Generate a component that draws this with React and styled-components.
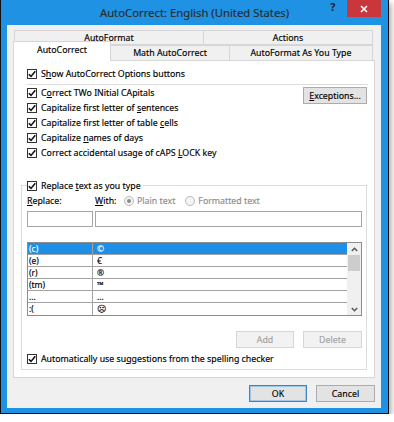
import React from "react";
import styled, { createGlobalStyle } from "styled-components";

const GlobalStyle = createGlobalStyle`
  html, body { margin: 0; padding: 0; background: #ffffff; }
  body {
    font-family: "Noto Sans", "Open Sans", sans-serif;
    color: #000;
    -webkit-text-stroke: 0.15px currentColor;
  }
  * { box-sizing: border-box; }
`;

const Window = styled.div`
  width: 389px;
  height: 414px;
  background: #2092e4;
  border: 1px solid #111;
  border-top: none;
  box-shadow: 2px 3px 6px rgba(0, 0, 0, 0.35);
  display: flex;
  flex-direction: column;
`;

const TitleBar = styled.div`
  height: 25px;
  display: grid;
  grid-template-columns: 1fr auto 1fr;
  align-items: start;
`;

const Title = styled.div`
  grid-column: 2;
  font-size: 11.3px;
  line-height: 26px;
  color: #2a2a2a;
  white-space: nowrap;
`;

const Controls = styled.div`
  grid-column: 3;
  justify-self: end;
  display: flex;
  margin-right: 7px;
`;

const HelpButton = styled.div`
  width: 28px;
  height: 17px;
  display: flex;
  align-items: center;
  justify-content: center;
  font-size: 10px;
  font-weight: 700;
  color: #222;
  padding-bottom: 4px;
`;

const CloseButton = styled.div`
  width: 34px;
  height: 17px;
  background: #c9363b;
  display: flex;
  align-items: center;
  justify-content: center;
`;

const Client = styled.div`
  flex: 1;
  margin: 0 7px 6px 6px;
  background: #f0f0f0;
  padding: 5px 6px 6px 6px;
  display: flex;
  flex-direction: column;
`;

const TabStrip = styled.div`
  display: flex;
  flex-direction: column;
`;

const TabRow = styled.div`
  display: flex;
  align-items: flex-end;
  height: ${(p) => p.$h}px;
  padding: 0 2px 0 ${(p) => p.$pl}px;
`;

const Tab = styled.div`
  width: ${(p) => (p.$w ? `${p.$w}px` : "auto")};
  flex: ${(p) => (p.$w ? "none" : "1")};
  height: ${(p) => (p.$active ? 20 : p.$h || 16)}px;
  margin-top: ${(p) => (p.$active ? -3 : 0)}px;
  margin-left: -1px;
  position: relative;
  z-index: ${(p) => (p.$active ? 2 : 1)};
  background: ${(p) => (p.$active ? "#ffffff" : "#f0f0f0")};
  border: 1px solid #d6d6d6;
  border-bottom: ${(p) => (p.$active ? "none" : "1px solid #d6d6d6")};
  display: flex;
  align-items: center;
  justify-content: center;
  font-size: 8.8px;
  padding-bottom: ${(p) => (p.$active ? 3 : 0)}px;
  white-space: nowrap;
`;

const Panel = styled.div`
  flex: 1;
  background: #ffffff;
  border: 1px solid #d6d6d6;
  margin-top: -1px;
  padding: 5px 7px 7px 13px;
  display: flex;
  flex-direction: column;
`;

const CheckRow = styled.div`
  display: flex;
  align-items: center;
  gap: 4px;
  height: 15px;
  font-size: 8.8px;
  white-space: nowrap;
`;

const Box = styled.span`
  width: 10px;
  height: 10px;
  border: 1px solid #333;
  background: #fff;
  display: inline-flex;
  align-items: center;
  justify-content: center;
  flex: none;
`;

const Key = styled.span`
  text-decoration: underline;
  text-underline-offset: 1px;
`;

const Separator = styled.div`
  height: 1px;
  background: #dcdcdc;
  margin-top: 3px;
  margin-right: -1px;
`;

const TopSection = styled.div`
  display: flex;
  justify-content: space-between;
  align-items: flex-start;
`;

const CheckList = styled.div`
  display: flex;
  flex-direction: column;
`;

const Button = styled.div`
  width: ${(p) => p.$w}px;
  height: 17px;
  margin-top: ${(p) => p.$mt || 0}px;
  display: flex;
  align-items: center;
  justify-content: center;
  font-size: 8.8px;
  background: ${(p) => (p.$disabled ? "#f2f2f2" : "#e3e3e3")};
  color: ${(p) => (p.$disabled ? "#a3a3a3" : "#000")};
  border: 1px solid
    ${(p) => (p.$default ? "#3b86c8" : p.$disabled ? "#d6d6d6" : "#acacac")};
  box-shadow: ${(p) => (p.$default ? "inset 0 0 0 1px #9cc6ea" : "none")};
`;

const GroupBox = styled.fieldset`
  margin: 18px 0 0 -6px;
  border: 1px solid #dcdcdc;
  padding: 0 4px 3px 5px;
  min-width: 0;
  display: flex;
  flex-direction: column;
`;

const Legend = styled.legend`
  padding: 0 2px 0 0;
  margin: 0;
`;

const LabelsRow = styled.div`
  display: flex;
  align-items: center;
  height: 15px;
  font-size: 8.8px;
  white-space: nowrap;
`;

const FieldLabel = styled.span`
  width: ${(p) => p.$w}px;
  flex: none;
`;

const RadioOption = styled.span`
  display: inline-flex;
  align-items: center;
  gap: 3px;
  color: #8d8d8d;
  margin-right: 10px;
`;

const Radio = styled.span`
  width: 10px;
  height: 10px;
  border-radius: 50%;
  border: 1px solid #b9b9b9;
  background: #f4f4f4;
  display: inline-flex;
  align-items: center;
  justify-content: center;
  &::after {
    content: "";
    width: 4px;
    height: 4px;
    border-radius: 50%;
    background: ${(p) => (p.$checked ? "#8a8a8a" : "transparent")};
  }
`;

const InputsRow = styled.div`
  display: flex;
  gap: 2px;
  margin-top: 3px;
`;

const TextInput = styled.div`
  height: 16px;
  width: ${(p) => (p.$w ? `${p.$w}px` : "auto")};
  flex: ${(p) => (p.$w ? "none" : "1")};
  border: 1px solid #a6a6a6;
  background: #fff;
`;

const ListBox = styled.div`
  margin-top: 15px;
  height: 74px;
  border: 1px solid #8c8c8c;
  display: flex;
  background: #fff;
`;

const Rows = styled.div`
  flex: 1;
  display: flex;
  flex-direction: column;
`;

const Row = styled.div`
  height: 12px;
  display: grid;
  grid-template-columns: 65px 1fr;
  border-bottom: ${(p) => (p.$last ? "none" : "1px solid #a2a2a2")};
  background: ${(p) => (p.$selected ? "#1e8fe6" : "transparent")};
  color: ${(p) => (p.$selected ? "#fff" : "#000")};
  font-size: 8.5px;
  line-height: 11px;
`;

const Cell = styled.span`
  padding-left: ${(p) => (p.$first ? 1 : 4)}px;
  border-right: ${(p) => (p.$first ? "1px solid #a2a2a2" : "none")};
  white-space: nowrap;
  overflow: hidden;
`;

const ScrollBar = styled.div`
  width: 14px;
  background: #f0f0f0;
  display: flex;
  flex-direction: column;
  align-items: center;
`;

const Arrow = styled.div`
  height: 12px;
  display: flex;
  align-items: center;
  justify-content: center;
`;

const Thumb = styled.div`
  width: 12px;
  height: 16px;
  background: #cdcdcd;
`;

const Spacer = styled.div`
  flex: 1;
`;

const ButtonRow = styled.div`
  display: flex;
  justify-content: flex-end;
  gap: 9px;
  margin-top: ${(p) => p.$mt}px;
`;

const AutoRow = styled(CheckRow)`
  margin-top: 3px;
`;

const Check = () => (
  <Box>
    <svg width="8" height="8" viewBox="0 0 8 8">
      <path d="M0.8 4.2 L3 6.4 L7.3 1.2" fill="none" stroke="#111" strokeWidth="1.6" />
    </svg>
  </Box>
);

const Chevron = ({ up }) => (
  <svg width="7" height="5" viewBox="0 0 7 5">
    <path
      d={up ? "M0.8 4 L3.5 1.2 L6.2 4" : "M0.8 1 L3.5 3.8 L6.2 1"}
      fill="none"
      stroke="#555"
      strokeWidth="1.4"
    />
  </svg>
);

const entries = [
  ["(c)", "©"],
  ["(e)", "€"],
  ["(r)", "®"],
  ["(tm)", "™"],
  ["...", "…"],
  [":(", "☹"],
];

export default function App() {
  return (
    <>
      <GlobalStyle />
      <Window>
        <TitleBar>
          <Title>AutoCorrect: English (United States)</Title>
          <Controls>
            <HelpButton>?</HelpButton>
            <CloseButton>
              <svg width="8" height="8" viewBox="0 0 8 8">
                <path d="M1 1 L7 7 M7 1 L1 7" stroke="#fff" strokeWidth="1.6" />
              </svg>
            </CloseButton>
          </Controls>
        </TitleBar>
        <Client>
          <TabStrip>
            <TabRow $h={15} $pl={2}>
              <Tab $w={190} $h={15}>AutoFormat</Tab>
              <Tab $h={15}>Actions</Tab>
            </TabRow>
            <TabRow $h={16} $pl={1}>
              <Tab $w={98} $active>AutoCorrect</Tab>
              <Tab $w={120}>Math AutoCorrect</Tab>
              <Tab>AutoFormat As You Type</Tab>
            </TabRow>
          </TabStrip>
          <Panel>
            <CheckRow>
              <Check />
              <span>
                S<Key>h</Key>ow AutoCorrect Options buttons
              </span>
            </CheckRow>
            <Separator />
            <TopSection>
              <CheckList>
                <CheckRow>
                  <Check />
                  <span>
                    C<Key>o</Key>rrect TWo INitial CApitals
                  </span>
                </CheckRow>
                <CheckRow>
                  <Check />
                  <span>
                    Capitalize first letter of <Key>s</Key>entences
                  </span>
                </CheckRow>
                <CheckRow>
                  <Check />
                  <span>
                    Capitalize first letter of table <Key>c</Key>ells
                  </span>
                </CheckRow>
                <CheckRow>
                  <Check />
                  <span>
                    Capitalize <Key>n</Key>ames of days
                  </span>
                </CheckRow>
                <CheckRow>
                  <Check />
                  <span>
                    Correct accidental usage of cAPS <Key>L</Key>OCK key
                  </span>
                </CheckRow>
              </CheckList>
              <Button $w={64} $mt={2}>
                <span>
                  <Key>E</Key>xceptions...
                </span>
              </Button>
            </TopSection>
            <GroupBox>
              <Legend>
                <CheckRow>
                  <Check />
                  <span>
                    Replace <Key>t</Key>ext as you type
                  </span>
                </CheckRow>
              </Legend>
              <LabelsRow>
                <FieldLabel $w={68}>
                  <Key>R</Key>eplace:
                </FieldLabel>
                <FieldLabel $w={29}>
                  <Key>W</Key>ith:
                </FieldLabel>
                <RadioOption>
                  <Radio $checked />
                  Plain text
                </RadioOption>
                <RadioOption>
                  <Radio />
                  Formatted text
                </RadioOption>
              </LabelsRow>
              <InputsRow>
                <TextInput $w={66} />
                <TextInput />
              </InputsRow>
              <ListBox>
                <Rows>
                  {entries.map(([a, b], i) => (
                    <Row key={a} $selected={i === 0} $last={i === entries.length - 1}>
                      <Cell $first>{a}</Cell>
                      <Cell>{b}</Cell>
                    </Row>
                  ))}
                </Rows>
                <ScrollBar>
                  <Arrow>
                    <Chevron up />
                  </Arrow>
                  <Thumb />
                  <Spacer />
                  <Arrow>
                    <Chevron />
                  </Arrow>
                </ScrollBar>
              </ListBox>
              <ButtonRow $mt={15}>
                <Button $w={58} $disabled>Add</Button>
                <Button $w={59} $disabled>Delete</Button>
              </ButtonRow>
              <AutoRow>
                <Check />
                <span>
                  Automatically use su<Key>g</Key>gestions from the spelling checker
                </span>
              </AutoRow>
            </GroupBox>
          </Panel>
          <ButtonRow $mt={7}>
            <Button $w={58} $default>OK</Button>
            <Button $w={59}>Cancel</Button>
          </ButtonRow>
        </Client>
      </Window>
    </>
  );
}
